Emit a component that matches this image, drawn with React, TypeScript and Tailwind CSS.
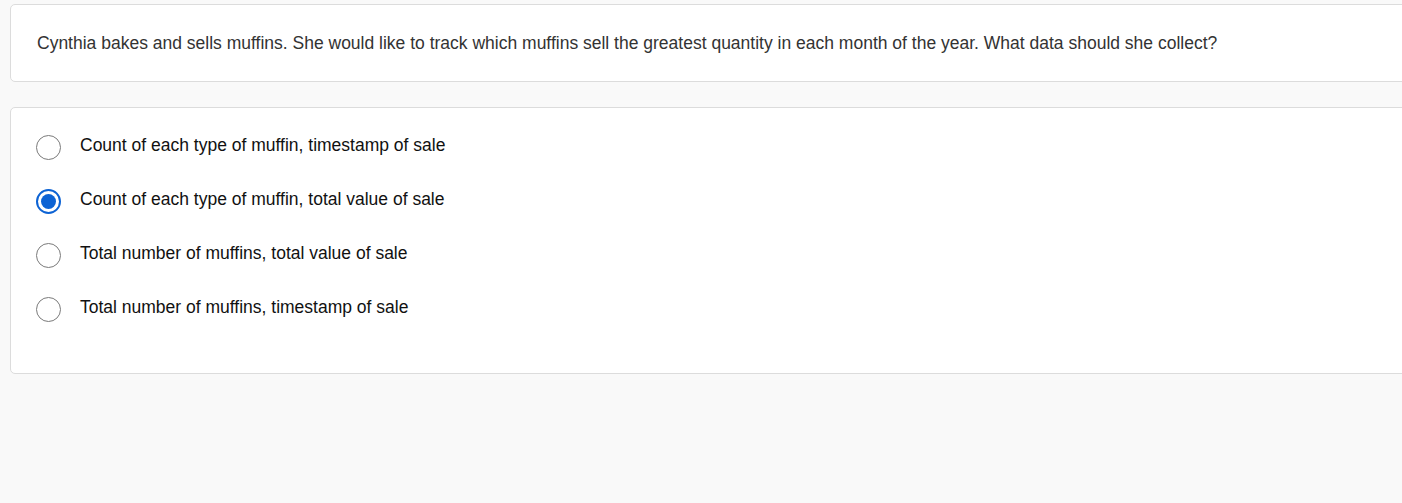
const options = [
  'Count of each type of muffin, timestamp of sale',
  'Count of each type of muffin, total value of sale',
  'Total number of muffins, total value of sale',
  'Total number of muffins, timestamp of sale',
];

function Radio({ checked }: { checked: boolean }) {
  if (checked) {
    return (
      <span className="flex h-[25px] w-[25px] shrink-0 items-center justify-center rounded-full border-2 border-[#0d63d4] bg-white">
        <span className="h-[15px] w-[15px] rounded-full bg-[#0d63d4]" />
      </span>
    );
  }
  return <span className="h-[25px] w-[25px] shrink-0 rounded-full border-[1.5px] border-[#7a7a7a] bg-white" />;
}

export default function App() {
  const selected = 1;
  return (
    <div className="h-[503px] w-full overflow-hidden bg-[#f9f9f9] pt-[4px] pl-[10px] font-['Liberation_Sans',Arial,sans-serif]">
      <div className="flex h-[78px] w-[1420px] items-center rounded-[5px] border border-[#dcdcdc] bg-white pl-[26px]">
        <p className="text-[17.5px] leading-[20px] text-[#333]">
          Cynthia bakes and sells muffins. She would like to track which muffins sell the greatest quantity in each month of the year. What data should she collect?
        </p>
      </div>
      <div className="mt-[25px] w-[1420px] rounded-[5px] border border-[#dcdcdc] bg-white pt-[12px] pb-[37px] pl-[25px]">
        {options.map((o, i) => (
          <label key={o} className="flex h-[54px] items-center gap-[19px]">
            <Radio checked={i === selected} />
            <span className="-translate-y-[2px] text-[17.5px] leading-[20px] text-[#111]">{o}</span>
          </label>
        ))}
      </div>
    </div>
  );
}
